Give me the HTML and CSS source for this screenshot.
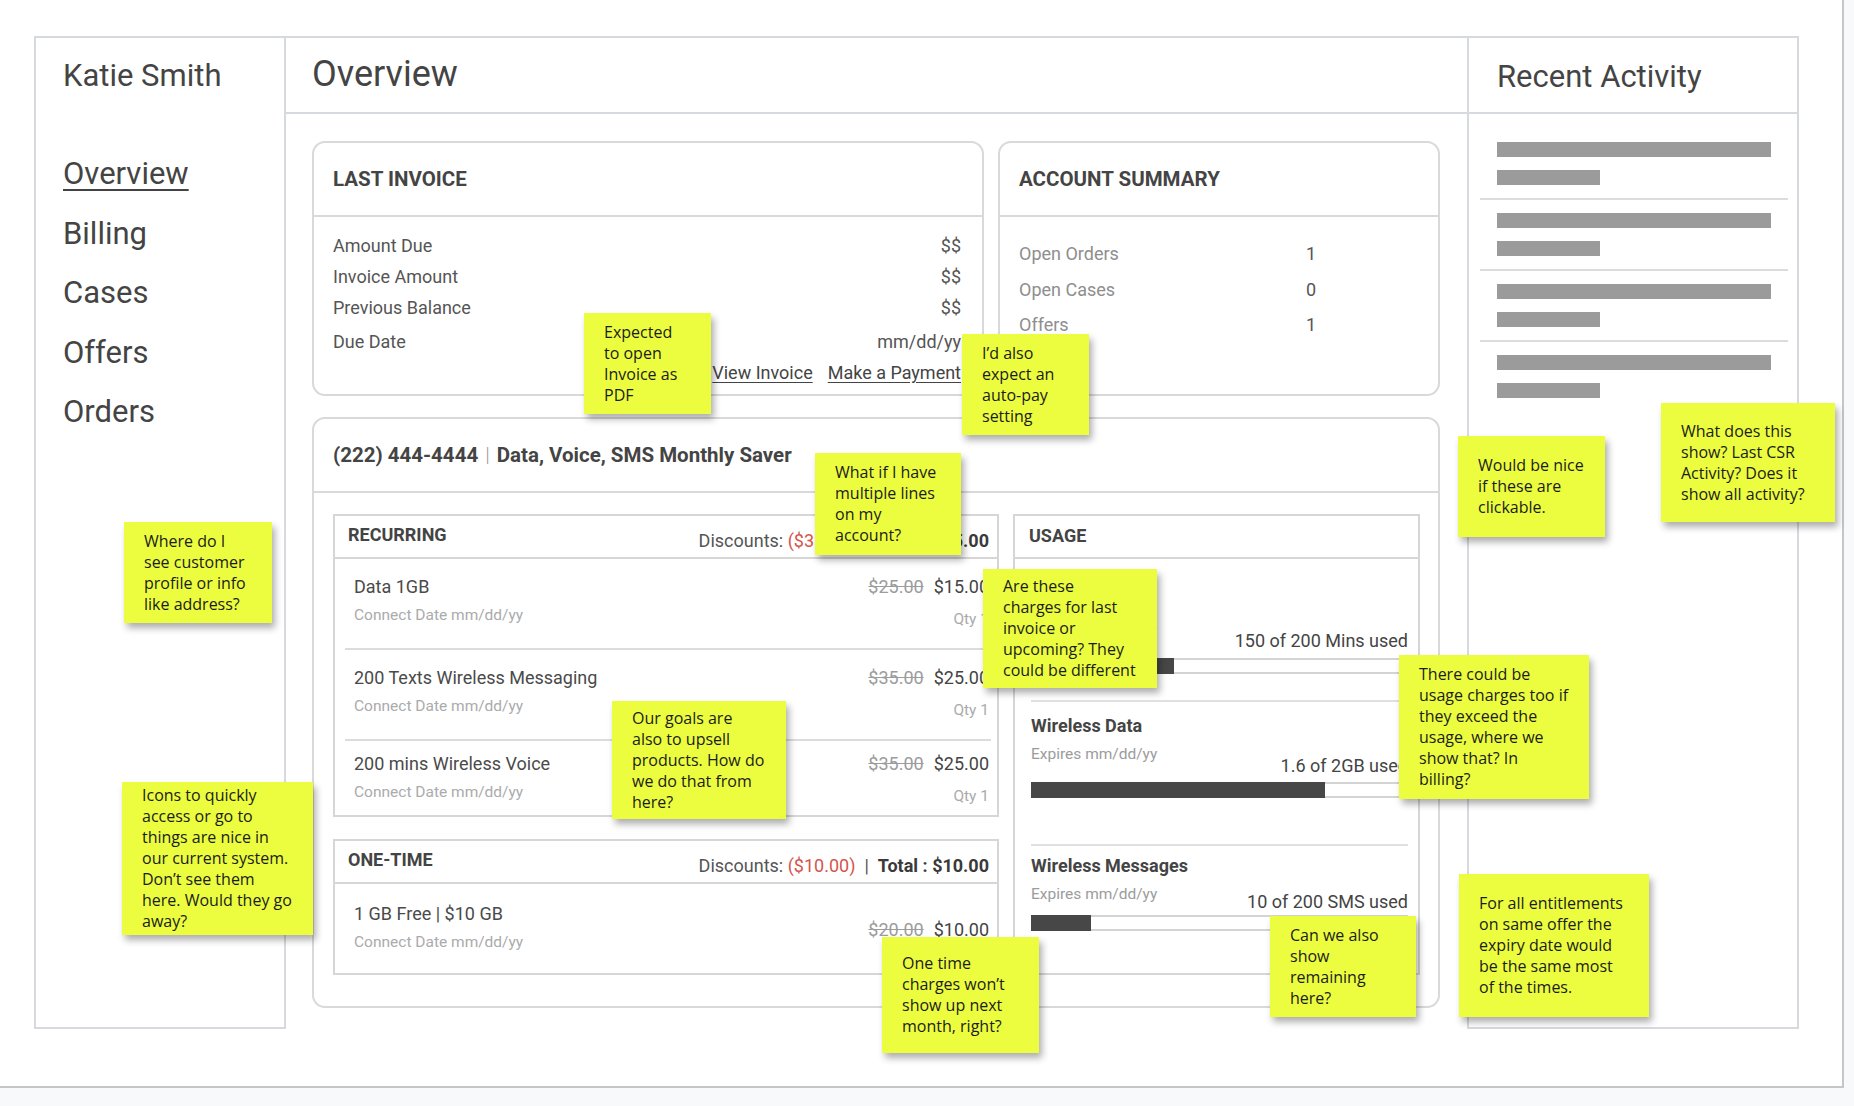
FILE: index.html
```html
<!DOCTYPE html>
<html lang="en">
<head>
<meta charset="utf-8">
<title>Overview - Katie Smith</title>
<link rel="stylesheet" href="styles.css">
</head>
<body>
<div class="page">
  <div class="frame">
    <aside class="sidebar">
      <h2 class="customer">Katie Smith</h2>
      <nav class="nav">
        <a class="nav-item active">Overview</a>
        <a class="nav-item">Billing</a>
        <a class="nav-item">Cases</a>
        <a class="nav-item">Offers</a>
        <a class="nav-item">Orders</a>
      </nav>
    </aside>

    <main class="main">
      <header class="main-head"><h1>Overview</h1></header>
      <div class="main-body">
        <div class="top-row">
          <section class="card">
            <div class="card-head">LAST INVOICE</div>
            <div class="invoice-body">
              <div class="inv-row"><span>Amount Due</span><span>$$</span></div>
              <div class="inv-row"><span>Invoice Amount</span><span>$$</span></div>
              <div class="inv-row"><span>Previous Balance</span><span>$$</span></div>
              <div class="inv-row due"><span>Due Date</span><span>mm/dd/yy</span></div>
              <div class="inv-links"><a>View Invoice</a><a>Make a Payment</a></div>
            </div>
          </section>
          <section class="card">
            <div class="card-head">ACCOUNT SUMMARY</div>
            <div class="summary-body">
              <span class="sum-label">Open Orders</span><span class="sum-val">1</span>
              <span class="sum-label">Open Cases</span><span class="sum-val">0</span>
              <span class="sum-label">Offers</span><span class="sum-val">1</span>
            </div>
          </section>
        </div>

        <section class="card service">
          <div class="card-head service-head">(222) 444-4444<span class="sep">|</span>Data, Voice, SMS Monthly Saver</div>
          <div class="service-body">
            <div class="charges">
              <div class="box">
                <div class="box-head">
                  <span class="box-title">RECURRING</span>
                  <span class="box-sum">Discounts: <span class="red">($35.00)</span><span class="pipe">|</span><b>Total : $65.00</b></span>
                </div>
                <div class="item">
                  <div class="item-left"><div class="item-name">Data 1GB</div><div class="item-date">Connect Date mm/dd/yy</div></div>
                  <div class="item-right"><div class="price"><s>$25.00</s><span>$15.00</span></div><div class="qty">Qty 1</div></div>
                </div>
                <div class="item">
                  <div class="item-left"><div class="item-name">200 Texts Wireless Messaging</div><div class="item-date">Connect Date mm/dd/yy</div></div>
                  <div class="item-right"><div class="price"><s>$35.00</s><span>$25.00</span></div><div class="qty">Qty 1</div></div>
                </div>
                <div class="item">
                  <div class="item-left"><div class="item-name">200 mins Wireless Voice</div><div class="item-date">Connect Date mm/dd/yy</div></div>
                  <div class="item-right"><div class="price"><s>$35.00</s><span>$25.00</span></div><div class="qty">Qty 1</div></div>
                </div>
              </div>
              <div class="box">
                <div class="box-head">
                  <span class="box-title">ONE-TIME</span>
                  <span class="box-sum">Discounts: <span class="red">($10.00)</span><span class="pipe">|</span><b>Total : $10.00</b></span>
                </div>
                <div class="item onetime">
                  <div class="item-left"><div class="item-name">1 GB Free | $10 GB</div><div class="item-date">Connect Date mm/dd/yy</div></div>
                  <div class="item-right"><div class="price"><s>$20.00</s><span>$10.00</span></div></div>
                </div>
              </div>
            </div>
            <div class="box usage">
              <div class="box-head"><span class="box-title">USAGE</span></div>
              <div class="u-sec">
                <div class="u-title">Wireless Voice</div>
                <div class="u-row"><span class="u-exp">Expires mm/dd/yy</span><span class="u-label">150 of 200 Mins used</span></div>
                <div class="bar"><div class="fill" style="width:38%"></div></div>
              </div>
              <div class="u-sec">
                <div class="u-title">Wireless Data</div>
                <div class="u-row"><span class="u-exp">Expires mm/dd/yy</span><span class="u-label">1.6 of 2GB used</span></div>
                <div class="bar"><div class="fill" style="width:78%"></div></div>
              </div>
              <div class="u-sec">
                <div class="u-title">Wireless Messages</div>
                <div class="u-row"><span class="u-exp">Expires mm/dd/yy</span><span class="u-label">10 of 200 SMS used</span></div>
                <div class="bar"><div class="fill" style="width:16%"></div></div>
              </div>
            </div>
          </div>
        </section>
      </div>
    </main>

    <aside class="recent">
      <h2 class="recent-head">Recent Activity</h2>
      <ul class="activity">
        <li><span class="bar-long"></span><span class="bar-short"></span></li>
        <li><span class="bar-long"></span><span class="bar-short"></span></li>
        <li><span class="bar-long"></span><span class="bar-short"></span></li>
        <li><span class="bar-long"></span><span class="bar-short"></span></li>
      </ul>
    </aside>
  </div>

  <div class="sticky s1">Expected<br>to open<br>Invoice as<br>PDF</div>
  <div class="sticky s2">I’d also<br>expect an<br>auto-pay<br>setting</div>
  <div class="sticky s3">What if I have<br>multiple lines<br>on my<br>account?</div>
  <div class="sticky s4">Are these<br>charges for last<br>invoice or<br>upcoming? They<br>could be different</div>
  <div class="sticky s5">Our goals are<br>also to upsell<br>products. How do<br>we do that from<br>here?</div>
  <div class="sticky s6">There could be<br>usage charges too if<br>they exceed the<br>usage, where we<br>show that? In<br>billing?</div>
  <div class="sticky s7">Would be nice<br>if these are<br>clickable.</div>
  <div class="sticky s8">What does this<br>show? Last CSR<br>Activity? Does it<br>show all activity?</div>
  <div class="sticky s9">Where do I<br>see customer<br>profile or info<br>like address?</div>
  <div class="sticky s10">Icons to quickly<br>access or go to<br>things are nice in<br>our current system.<br>Don’t see them<br>here. Would they go<br>away?</div>
  <div class="sticky s11">For all entitlements<br>on same offer the<br>expiry date would<br>be the same most<br>of the times.</div>
  <div class="sticky s12">Can we also<br>show<br>remaining<br>here?</div>
  <div class="sticky s13">One time<br>charges won’t<br>show up next<br>month, right?</div>
</div>
</body>
</html>
```

FILE: styles.css
```css
html, body {
  margin: 0;
  padding: 0;
  background: #f8f9fb;
}

.page {
  position: relative;
  box-sizing: border-box;
  width: 1844px;
  height: 1088px;
  padding: 36px 0 0 34px;
  background: #fff;
  border-right: 2px solid #c5c6c8;
  border-bottom: 2px solid #c5c6c8;
  font-family: Roboto, "Liberation Sans", sans-serif;
  color: #444;
}

.frame {
  display: flex;
  align-items: flex-start;
}

/* ---------- sidebar ---------- */
.sidebar {
  box-sizing: border-box;
  width: 252px;
  height: 993px;
  border: 2px solid #d6dadf;
  padding: 0 0 0 27px;
}

.customer {
  margin: 0;
  height: 76px;
  font-size: 31px;
  line-height: 76px;
  font-weight: 400;
  color: #444;
}

.nav {
  display: flex;
  flex-direction: column;
  padding-top: 30px;
}

.nav-item {
  font-size: 31px;
  line-height: 59.5px;
  color: #444;
}

.nav-item.active {
  text-decoration: underline;
  text-decoration-thickness: 2px;
  text-underline-offset: 5px;
}

/* ---------- main ---------- */
.main {
  width: 1181px;
  border-top: 2px solid #d6dadf;
}

.main-head {
  height: 74px;
  border-bottom: 2px solid #d6dadf;
  padding-left: 26px;
}

.main-head h1 {
  margin: 0;
  font-size: 36px;
  line-height: 72px;
  font-weight: 400;
  color: #444;
}

.main-body {
  padding: 27px 27px 0 26px;
}

.top-row {
  display: grid;
  grid-template-columns: 672px 442px;
  gap: 14px;
  margin-bottom: 21px;
}

.card {
  border: 2px solid #d9d9d9;
  border-radius: 13px;
  background: #fff;
}

.card-head {
  padding: 24px 19px 24px;
  border-bottom: 2px solid #d9d9d9;
  font-size: 20.5px;
  line-height: 24px;
  font-weight: 700;
  color: #444;
}

.invoice-body {
  padding: 13px 21px 6px 19px;
  font-size: 18px;
  line-height: 31px;
  color: #555;
}

.inv-row {
  display: flex;
  justify-content: space-between;
}

.inv-row.due {
  margin-top: 3px;
}

.inv-links {
  display: flex;
  justify-content: flex-end;
  gap: 15px;
}

.inv-links a {
  color: #444;
  text-decoration: underline;
  text-underline-offset: 3px;
}

.summary-body {
  display: grid;
  grid-template-columns: 287px auto;
  padding: 19px 19px 0;
  font-size: 18px;
  line-height: 35.5px;
}

.sum-label { color: #8e8e8e; }
.sum-val { color: #555; }

/* ---------- service card ---------- */
.service-head {
  padding: 24px 19px 24px;
}

.sep {
  font-weight: 300;
  color: #9a9a9a;
  margin: 0 7px;
}

.service-body {
  display: grid;
  grid-template-columns: 666px 407px;
  gap: 14px;
  padding: 21px 18px 31px 19px;
}

.charges {
  display: flex;
  flex-direction: column;
  gap: 22px;
}

.box {
  border: 2px solid #d6d6d6;
}

.box-head {
  display: flex;
  justify-content: space-between;
  align-items: flex-start;
  height: 41px;
  border-bottom: 2px solid #d6d6d6;
  padding: 0 8px 0 13px;
}

.box-title {
  margin-top: 9px;
  font-size: 18px;
  line-height: 20px;
  font-weight: 700;
  color: #444;
}

.box-sum {
  margin-top: 15px;
  font-size: 18px;
  line-height: 20px;
  color: #555;
}

.box-sum b {
  color: #3a3a3a;
  font-weight: 700;
}

.red { color: #d4554d; }

.pipe {
  margin: 0 9px;
  color: #555;
}

.item {
  display: flex;
  justify-content: space-between;
  align-items: flex-start;
  margin: 0 6px 0 10px;
  padding: 16px 2px 17px 9px;
  border-bottom: 2px solid #dcdcdc;
}

.item:last-child {
  border-bottom: none;
  padding: 11px 2px 7px 9px;
}

.item.onetime {
  align-items: center;
  padding: 18px 2px 15px 9px;
}

.item-name {
  font-size: 18px;
  line-height: 24px;
  color: #4a4a4a;
}

.item-date {
  font-size: 15.5px;
  line-height: 32px;
  color: #ababab;
}

.price {
  font-size: 18px;
  line-height: 24px;
  color: #444;
}

.price s {
  color: #9c9c9c;
  margin-right: 10px;
}

.qty {
  padding-top: 8px;
  font-size: 15.5px;
  line-height: 24px;
  color: #ababab;
  text-align: right;
}

/* ---------- usage ---------- */
.usage .box-head {
  padding-left: 14px;
}

.usage .box-title {
  margin-top: 10px;
}

.u-sec {
  margin: 0 10px 0 16px;
}

.u-sec:nth-child(2) { padding: 33px 0 26px; }
.u-sec:nth-child(3) { padding: 13px 0 46px; border-top: 2px solid #e0e0e0; }
.u-sec:nth-child(4) { padding: 9px 0 0; border-top: 2px solid #e0e0e0; }

.u-title {
  font-size: 18px;
  line-height: 22px;
  font-weight: 700;
  color: #444;
}

.u-row {
  display: flex;
  justify-content: space-between;
  align-items: flex-start;
  margin-top: 7px;
}

.u-exp {
  font-size: 15.5px;
  line-height: 20px;
  color: #9c9c9c;
}

.u-label {
  font-size: 18px;
  line-height: 20px;
  color: #444;
}

.u-sec:nth-child(2) .u-label { padding-top: 10px; }
.u-sec:nth-child(3) .u-label { padding-top: 12px; }
.u-sec:nth-child(4) .u-label { padding-top: 8px; }

.bar {
  height: 16px;
  background: #fff;
  box-shadow: inset 0 0 0 2px #d4d4d4;
}

.u-sec:nth-child(2) .bar { margin-top: 7px; }
.u-sec:nth-child(3) .bar { margin-top: 6px; }
.u-sec:nth-child(4) .bar { margin-top: 3px; }

.fill {
  height: 100%;
  background: #474747;
}

/* ---------- recent activity ---------- */
.recent {
  box-sizing: border-box;
  width: 332px;
  height: 993px;
  border: 2px solid #d6dadf;
}

.recent-head {
  margin: 0;
  height: 74px;
  border-bottom: 2px solid #d6dadf;
  padding-left: 28px;
  font-size: 31px;
  line-height: 78px;
  font-weight: 400;
  color: #444;
  overflow: hidden;
}

.activity {
  list-style: none;
  margin: 0;
  padding: 28px 9px 0 11px;
}

.activity li {
  padding: 13px 0 13px 17px;
  border-bottom: 2px solid #dcdcdc;
}

.activity li:first-child { padding-top: 0; }
.activity li:last-child { border-bottom: none; }

.bar-long, .bar-short {
  display: block;
  height: 15px;
  background: #9b9b9b;
}

.bar-long { width: 274px; }
.bar-short { width: 103px; margin-top: 13px; }

/* ---------- sticky notes ---------- */
.sticky {
  position: absolute;
  box-sizing: border-box;
  display: flex;
  flex-direction: column;
  justify-content: center;
  padding-left: 20px;
  background: #ebfd3e;
  box-shadow: 3px 5px 7px rgba(0, 0, 0, 0.32);
  font-family: "Open Sans", sans-serif;
  font-size: 16px;
  line-height: 21px;
  color: #1c1c1c;
  white-space: nowrap;
}

.s1  { left: 584px;  top: 313px; width: 127px; height: 101px; }
.s2  { left: 962px;  top: 334px; width: 127px; height: 101px; }
.s3  { left: 815px;  top: 453px; width: 146px; height: 102px; }
.s4  { left: 983px;  top: 569px; width: 174px; height: 119px; }
.s5  { left: 612px;  top: 701px; width: 174px; height: 118px; }
.s6  { left: 1399px; top: 655px; width: 190px; height: 144px; }
.s7  { left: 1458px; top: 436px; width: 147px; height: 101px; }
.s8  { left: 1661px; top: 403px; width: 174px; height: 119px; }
.s9  { left: 124px;  top: 522px; width: 148px; height: 101px; }
.s10 { left: 122px;  top: 782px; width: 191px; height: 153px; }
.s11 { left: 1459px; top: 874px; width: 190px; height: 143px; }
.s12 { left: 1270px; top: 916px; width: 146px; height: 101px; }
.s13 { left: 882px;  top: 937px; width: 157px; height: 116px; }
```
